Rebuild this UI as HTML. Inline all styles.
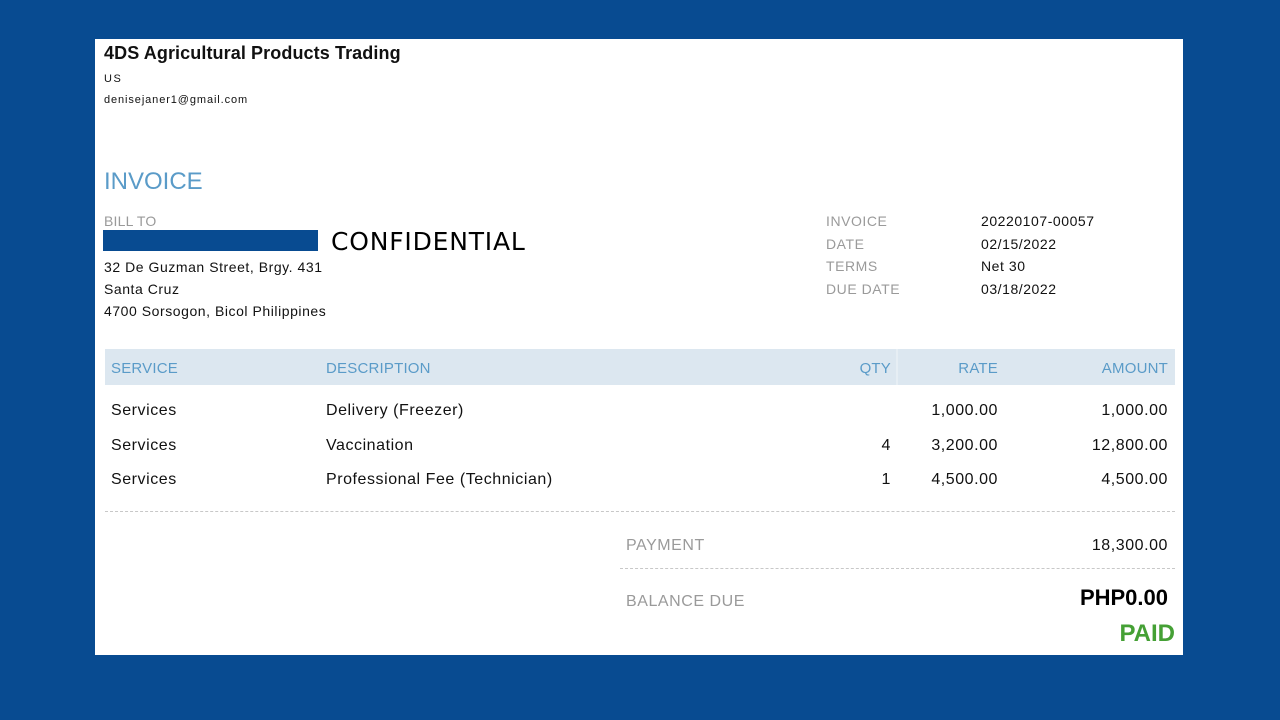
<!DOCTYPE html>
<html><head><style>
*{margin:0;padding:0;box-sizing:border-box}
body{width:1280px;height:720px;background:#084b91;position:relative;overflow:hidden;font-family:"Liberation Sans",Arial,sans-serif;color:#111}
.card{position:absolute;left:95px;top:39px;width:1088px;height:616px;background:#fff}
.t{position:absolute;white-space:nowrap;line-height:1;letter-spacing:0.55px}
.g{color:#9a9a9a}
.b{color:#5a9bc8}
.r{text-align:right}
</style></head><body>
<div class="card"></div>
<div class="t" style="left:104px;top:44px;font-size:18px;font-weight:bold;letter-spacing:0.1px">4DS Agricultural Products Trading</div>
<div class="t" style="left:104px;top:74px;font-size:11px;letter-spacing:1.5px">US</div>
<div class="t" style="left:104px;top:95px;font-size:11px;letter-spacing:0.9px">denisejaner1@gmail.com</div>
<div class="t b" style="left:104px;top:170px;font-size:24px;letter-spacing:0">INVOICE</div>
<div class="t g" style="left:104px;top:214px;font-size:14px;letter-spacing:0.2px">BILL TO</div>
<div style="position:absolute;left:103px;top:230px;width:215px;height:21px;background:#084b91"></div>
<div class="t" style="left:331px;top:229px;font-size:25px;font-family:'DejaVu Sans',sans-serif;letter-spacing:0.8px;color:#000">CONFIDENTIAL</div>
<div class="t" style="left:104px;top:260px;font-size:14px">32 De Guzman Street, Brgy. 431</div>
<div class="t" style="left:104px;top:282px;font-size:14px">Santa Cruz</div>
<div class="t" style="left:104px;top:304px;font-size:14px">4700 Sorsogon, Bicol Philippines</div>
<div class="t g" style="left:826px;top:214px;font-size:14px">INVOICE</div>
<div class="t g" style="left:826px;top:237px;font-size:14px">DATE</div>
<div class="t g" style="left:826px;top:259px;font-size:14px">TERMS</div>
<div class="t g" style="left:826px;top:282px;font-size:14px">DUE DATE</div>
<div class="t" style="left:981px;top:214px;font-size:14px">20220107-00057</div>
<div class="t" style="left:981px;top:237px;font-size:14px">02/15/2022</div>
<div class="t" style="left:981px;top:259px;font-size:14px">Net 30</div>
<div class="t" style="left:981px;top:282px;font-size:14px">03/18/2022</div>
<div style="position:absolute;left:105px;top:349px;width:1070px;height:36px;background:#dce7f0"></div>
<div style="position:absolute;left:896px;top:349px;width:2px;height:36px;background:#e6eef4"></div>
<div class="t b" style="left:111px;top:361px;font-size:15px;letter-spacing:0.2px">SERVICE</div>
<div class="t b" style="left:326px;top:361px;font-size:15px;letter-spacing:0.2px">DESCRIPTION</div>
<div class="t b r" style="right:389px;top:361px;font-size:15px;letter-spacing:0.2px">QTY</div>
<div class="t b r" style="right:282px;top:361px;font-size:15px;letter-spacing:0.2px">RATE</div>
<div class="t b r" style="right:112px;top:361px;font-size:15px;letter-spacing:0.2px">AMOUNT</div>
<div class="t" style="left:111px;top:403px;font-size:16px">Services</div>
<div class="t" style="left:326px;top:403px;font-size:16px">Delivery (Freezer)</div>
<div class="t r" style="right:282px;top:403px;font-size:16px">1,000.00</div>
<div class="t r" style="right:112px;top:403px;font-size:16px">1,000.00</div>
<div class="t" style="left:111px;top:438px;font-size:16px">Services</div>
<div class="t" style="left:326px;top:438px;font-size:16px">Vaccination</div>
<div class="t r" style="right:389px;top:438px;font-size:16px">4</div>
<div class="t r" style="right:282px;top:438px;font-size:16px">3,200.00</div>
<div class="t r" style="right:112px;top:438px;font-size:16px">12,800.00</div>
<div class="t" style="left:111px;top:472px;font-size:16px">Services</div>
<div class="t" style="left:326px;top:472px;font-size:16px">Professional Fee (Technician)</div>
<div class="t r" style="right:389px;top:472px;font-size:16px">1</div>
<div class="t r" style="right:282px;top:472px;font-size:16px">4,500.00</div>
<div class="t r" style="right:112px;top:472px;font-size:16px">4,500.00</div>
<div style="position:absolute;left:105px;top:511px;width:1070px;border-top:1px dashed #c8c8c8"></div>
<div class="t g" style="left:626px;top:538px;font-size:16px">PAYMENT</div>
<div class="t r" style="right:112px;top:538px;font-size:16px">18,300.00</div>
<div style="position:absolute;left:620px;top:568px;width:555px;border-top:1px dashed #c8c8c8"></div>
<div class="t g" style="left:626px;top:594px;font-size:16px">BALANCE DUE</div>
<div class="t r" style="right:112px;top:587px;font-size:22px;font-weight:bold;color:#000;letter-spacing:0">PHP0.00</div>
<div class="t r" style="right:105px;top:622px;font-size:24px;font-weight:bold;color:#45a035;letter-spacing:0">PAID</div>
</body></html>
